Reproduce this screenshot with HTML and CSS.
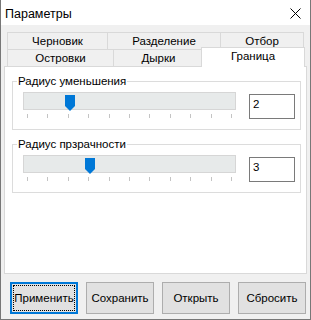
FILE: index.html
```html
<!DOCTYPE html>
<html lang="ru">
<head>
  <meta charset="UTF-8" />
  <title>Параметры</title>
  <link rel="stylesheet" href="styles.css">
</head>
<body>
  <div class="window">
    <div class="titlebar">
      <span class="title">Параметры</span>
      <svg class="close" width="11" height="11" viewBox="0 0 11 11">
        <path d="M0.5 0.5 L10.5 10.5 M10.5 0.5 L0.5 10.5" stroke="#000" stroke-width="1" fill="none"/>
      </svg>
    </div>

    <div class="client">
      <div class="tabs">
        <div class="tab-row">
          <div class="tab t-draft">Черновик</div>
          <div class="tab t-split">Разделение</div>
          <div class="tab t-pick">Отбор</div>
        </div>
        <div class="tab-row">
          <div class="tab t-islands">Островки</div>
          <div class="tab t-holes">Дырки</div>
          <div class="tab active">Граница</div>
        </div>
      </div>

      <div class="page">
        <fieldset class="group">
          <legend>Радиус уменьшения</legend>
          <div class="row">
            <div class="slider">
              <div class="track">
                <svg class="thumb" style="left: 41px" width="10" height="16" viewBox="0 0 10 16">
                  <path d="M0 0 H10 V11 L5 16 L0 11 Z" fill="#0078d7"/>
                </svg>
              </div>
              <div class="ticks">
                <i></i><i></i><i></i><i></i><i></i><i></i><i></i><i></i><i></i><i></i><i></i>
              </div>
            </div>
            <input class="num" type="text" value="2">
          </div>
        </fieldset>

        <fieldset class="group">
          <legend>Радиус прзрачности</legend>
          <div class="row">
            <div class="slider">
              <div class="track">
                <svg class="thumb" style="left: 61px" width="10" height="16" viewBox="0 0 10 16">
                  <path d="M0 0 H10 V11 L5 16 L0 11 Z" fill="#0078d7"/>
                </svg>
              </div>
              <div class="ticks">
                <i></i><i></i><i></i><i></i><i></i><i></i><i></i><i></i><i></i><i></i><i></i>
              </div>
            </div>
            <input class="num" type="text" value="3">
          </div>
        </fieldset>
      </div>

      <div class="buttons">
        <button class="btn focused">Применить</button>
        <button class="btn">Сохранить</button>
        <button class="btn">Открыть</button>
        <button class="btn">Сбросить</button>
      </div>
    </div>
  </div>
</body>
</html>
```

FILE: styles.css
```css
body {
  margin: 0;
  background-color: #ffffff;
  font-family: 'Liberation Sans', Arial, sans-serif;
  font-size: 11.5px;
  color: #000;
}

.window {
  width: 311px;
  height: 320px;
  box-sizing: border-box;
  border: 1px solid #777;
  border-top: none;
  background-color: #f0f0f0;
  display: flex;
  flex-direction: column;
}

.titlebar {
  height: 25px;
  background-color: #ffffff;
  display: flex;
  align-items: center;
  justify-content: space-between;
  padding: 0 9px 0 4px;
}

.title {
  font-size: 12.5px;
  padding-top: 2px;
}

.close {
  display: block;
  margin-top: 2px;
}

.client {
  padding: 7px 3px 0 3px;
}

/* tabs */

.tabs {
  margin-left: 3px;
}

.tab-row {
  display: flex;
  align-items: flex-start;
}

.tab {
  height: 17px;
  box-sizing: border-box;
  border: 1px solid #d9d9d9;
  border-bottom: none;
  margin-right: -1px;
  background-color: #f0f0f0;
  text-align: center;
  line-height: 16px;
}

.t-draft { width: 101px; }
.t-split { width: 114px; }
.t-pick { width: 84px; }
.t-islands { width: 107px; }
.t-holes { width: 91px; }

.tab.active {
  position: relative;
  z-index: 1;
  width: 104px;
  height: 20px;
  margin-top: -2px;
  margin-bottom: -1px;
  margin-left: -2px;
  background-color: #ffffff;
  line-height: 17px;
}

/* tab page */

.page {
  height: 208px;
  box-sizing: border-box;
  border: 1px solid #d9d9d9;
  background-color: #ffffff;
  padding: 7px 5px 0 7px;
}

.group {
  margin: 0;
  padding: 0 4px 10px 10px;
  min-width: 0;
  border: 1px solid #dcdcdc;
}

.group + .group {
  margin-top: 7px;
}

.group legend {
  padding: 0 1px;
  margin-left: -6px;
  line-height: 14px;
}

.row {
  display: flex;
  align-items: flex-start;
}

.slider {
  width: 213px;
  margin-top: 4px;
}

.track {
  position: relative;
  height: 18px;
  box-sizing: border-box;
  background-color: #e7eaea;
  border: 1px solid #d6d6d6;
}

.thumb {
  position: absolute;
  top: 2px;
  display: block;
}

.ticks {
  display: flex;
  justify-content: space-between;
  padding: 0 4px;
  margin-top: 4px;
  height: 4px;
}

.ticks i {
  width: 1px;
  background-color: #c4c4c4;
}

.num {
  width: 46px;
  height: 25px;
  box-sizing: border-box;
  margin: 6px 0 0 13px;
  padding: 2px 3px 8px;
  border: 1px solid #7a7a7a;
  font-family: inherit;
  font-size: 11.5px;
  color: #000;
  outline: none;
}

/* buttons */

.buttons {
  display: flex;
  gap: 8px;
  padding-left: 6px;
  margin-top: 8px;
}

.btn {
  position: relative;
  width: 68px;
  height: 32px;
  background-color: #e1e1e1;
  border: 1px solid #adadad;
  font-family: inherit;
  font-size: 11.5px;
  color: #000;
  padding: 0;
}

.btn.focused {
  border: 2px solid #0078d7;
}

.btn.focused::after {
  content: "";
  position: absolute;
  top: 1px;
  left: 1px;
  right: 1px;
  bottom: 1px;
  border: 1px dotted #000;
}
```
